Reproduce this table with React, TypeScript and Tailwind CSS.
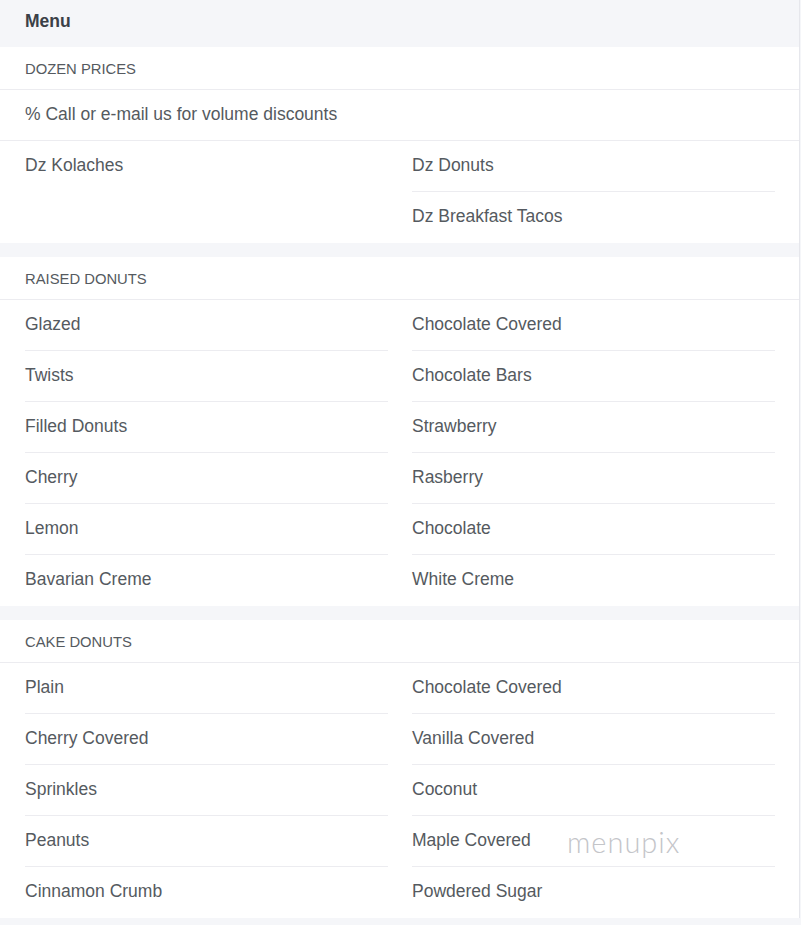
import React from 'react';

interface Section {
  title: string;
  note?: string;
  left: string[];
  right: string[];
}

const SECTIONS: Section[] = [
  {
    title: 'Dozen Prices',
    note: '% Call or e-mail us for volume discounts',
    left: ['Dz Kolaches'],
    right: ['Dz Donuts', 'Dz Breakfast Tacos'],
  },
  {
    title: 'Raised Donuts',
    left: ['Glazed', 'Twists', 'Filled Donuts', 'Cherry', 'Lemon', 'Bavarian Creme'],
    right: ['Chocolate Covered', 'Chocolate Bars', 'Strawberry', 'Rasberry', 'Chocolate', 'White Creme'],
  },
  {
    title: 'Cake Donuts',
    left: ['Plain', 'Cherry Covered', 'Sprinkles', 'Peanuts', 'Cinnamon Crumb'],
    right: ['Chocolate Covered', 'Vanilla Covered', 'Coconut', 'Maple Covered', 'Powdered Sugar'],
  },
];

const Column: React.FC<{ items: string[] }> = ({ items }) => (
  <div className="flex flex-col">
    {items.map((item, i) => (
      <div
        key={item}
        className={`h-[51px] flex items-center pb-[2px] text-[17.5px] text-[#555a60] ${
          i < items.length - 1 ? 'border-b border-[#ececf0]' : ''
        }`}
      >
        {item}
      </div>
    ))}
  </div>
);

export default function App() {
  return (
    <div
      className="relative w-[801px] min-h-[925px] bg-[#f5f6f9]"
      style={{ fontFamily: '"Liberation Sans", Arial, sans-serif' }}
    >
      <div className="w-[800px] border-r border-[#e6e7ec] bg-[#f5f6f9]">
        {/* Header */}
        <div className="h-[47px] flex items-center pl-[25px] pb-[4px] text-[17.5px] font-bold text-[#3b4047]">
          Menu
        </div>

        {SECTIONS.map((section, idx) => (
          <div key={section.title} className={`bg-white ${idx > 0 ? 'mt-[14px]' : ''}`}>
            <div className="h-[43px] flex items-center pl-[25px] border-b border-[#ececf0] text-[14.8px] uppercase text-[#555a60] pt-[3px]">
              {section.title}
            </div>
            {section.note && (
              <div className="h-[51px] flex items-center pl-[25px] pb-[2px] border-b border-[#ececf0] text-[17.5px] text-[#555a60]">
                {section.note}
              </div>
            )}
            <div className="grid grid-cols-2 gap-x-[24px] pl-[25px] pr-[24px]">
              <Column items={section.left} />
              <Column items={section.right} />
            </div>
          </div>
        ))}
      </div>

      {/* watermark */}
      <div
        className="absolute left-[567px] top-[820px] text-[29px] font-light tracking-[1px] text-[#c4c5c9] select-none pointer-events-none"
        style={{ fontFamily: 'Lato, "Open Sans", sans-serif' }}
      >
        menupix
      </div>
    </div>
  );
}
